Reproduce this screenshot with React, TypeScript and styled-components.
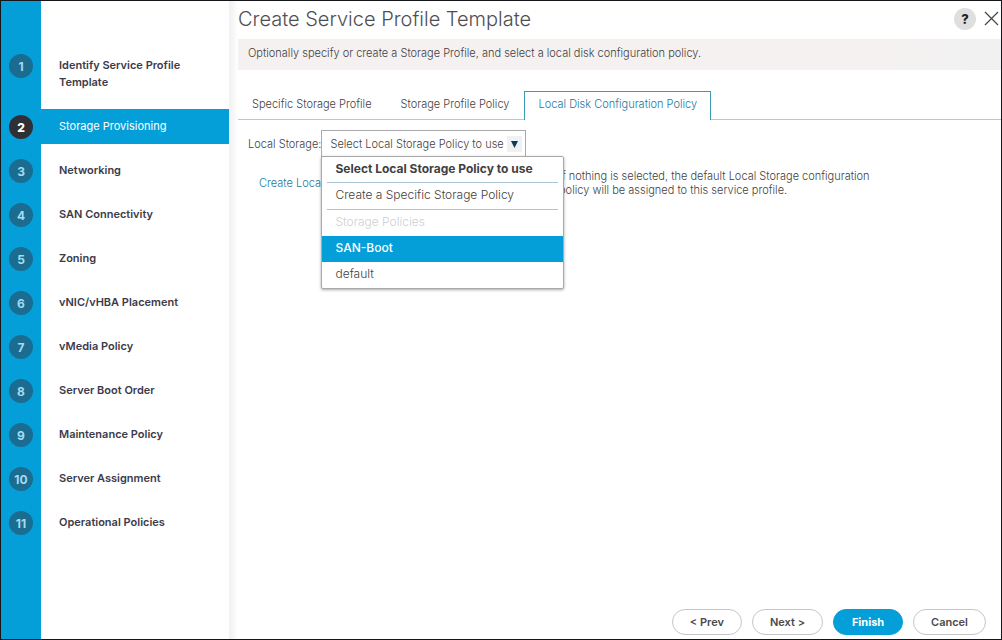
import React, { useState } from "react";
import styled, { createGlobalStyle, css } from "styled-components";

const BLUE = "#049fd9";

const GlobalStyle = createGlobalStyle`
  *, *::before, *::after { box-sizing: border-box; }
  body {
    margin: 0;
    background: #fff;
    color: #3f3f42;
    font-family: Inter, "Liberation Sans", sans-serif;
    font-size: 11px;
    font-weight: 300;
    line-height: 14px;
  }
  button, select { font: inherit; color: inherit; }
`;

const Wizard = styled.div`
  display: flex;
  min-height: 100vh;
  border: 1px solid #15151c;
`;

const Sidebar = styled.nav`
  flex: 0 0 228px;
  padding-top: 43px;
  background: linear-gradient(to right, ${BLUE} 40px, #fff 40px);
`;

const StepList = styled.ol`
  list-style: none;
  margin: 0;
  padding: 0;
`;

const StepRow = styled.li`
  display: flex;
  align-items: flex-start;
`;

const StepNumber = styled.span<{ $active: boolean }>`
  flex: 0 0 24px;
  height: 24px;
  margin: 10px 8px;
  border-radius: 50%;
  background: ${(p) => (p.$active ? "#2f2f36" : "#1a6d90")};
  color: ${(p) => (p.$active ? "#fff" : "#a4dcf2")};
  font-size: 12px;
  font-weight: ${(p) => (p.$active ? 800 : 700)};
  line-height: 25px;
  text-align: center;
`;

const StepLink = styled.a<{ $active: boolean }>`
  flex: 1;
  margin: 4px 0 5px;
  padding: 9px 40px 9px 18px;
  color: #3c3b4a;
  font-weight: 600;
  line-height: 17px;
  text-decoration: none;
  ${(p) =>
    p.$active &&
    css`
      background: ${BLUE};
      color: #fff;
      font-weight: 400;
    `}
`;

const Main = styled.main`
  flex: 1;
  min-width: 0;
  display: flex;
  flex-direction: column;
  padding-left: 9px;
  background: linear-gradient(to right, #f1efef, #fff 9px);
`;

const Header = styled.header`
  display: flex;
  align-items: center;
  height: 38px;
  padding: 0 2px 3px 0;
`;

const Title = styled.h1`
  flex: 1;
  margin: 0;
  font-size: 20px;
  font-weight: 300;
  line-height: 24px;
  color: #4f4f52;
`;

const HelpButton = styled.button`
  width: 22px;
  height: 22px;
  padding: 0;
  margin-right: 8px;
  border: 0;
  border-radius: 50%;
  background: #dfdfdf;
  color: #222;
  font-size: 13px;
  font-weight: 800;
  line-height: 22px;
`;

const CloseButton = styled.button`
  display: flex;
  padding: 0;
  border: 0;
  background: none;
`;

const Description = styled.p`
  margin: 0;
  padding: 7px 10px 10px;
  background: linear-gradient(to right, #f5f1f1 85%, #f1f1f1);
`;

const TabBar = styled.div`
  display: flex;
  gap: 1px;
  margin-top: 21px;
  border-bottom: 1px solid #c4c4c8;
`;

const Tab = styled.button<{ $active: boolean }>`
  margin-bottom: -1px;
  padding: 5px 13px 9px;
  border: 1px solid transparent;
  border-bottom: 0;
  background: none;
  ${(p) =>
    p.$active &&
    css`
      border-color: #3d9bb8;
      background: #fff;
      color: #1b7aa1;
    `}
`;

const Panel = styled.section`
  flex: 1;
  padding: 10px;
`;

const Field = styled.div`
  display: flex;
  align-items: center;
`;

const FieldLabel = styled.label`
  flex: 0 0 73px;
  white-space: nowrap;
`;

const SelectWrap = styled.div`
  position: relative;
  width: 205px;
`;

const PolicySelect = styled.select`
  display: block;
  width: 100%;
  height: 27px;
  padding: 0 20px 0 8px;
  border: 1px solid #aaa;
  border-radius: 0;
  background: #fff;
  appearance: none;
`;

const Arrow = styled.span`
  position: absolute;
  top: 6px;
  right: 4px;
  display: flex;
  align-items: center;
  justify-content: center;
  width: 15px;
  height: 16px;
  background: #f0f1f3;
  pointer-events: none;
`;

const Menu = styled.ul`
  position: absolute;
  z-index: 1;
  top: 26px;
  left: 0;
  width: 243px;
  margin: 0;
  padding: 0;
  list-style: none;
  border: 1px solid #aaa;
  border-radius: 2px;
  background: #fff;
  font-size: 12px;
  box-shadow: 0 1px 3px rgba(0, 0, 0, 0.35);
`;

const MenuItem = styled.li<{ $kind?: "title" | "muted" | "selected" }>`
  padding: 5px 13px 7px;
  ${(p) => p.$kind === "title" && css`padding-bottom: 6px; font-weight: 700;`}
  ${(p) => p.$kind === "muted" && css`color: #cfcfd2;`}
  ${(p) => p.$kind === "selected" && css`background: ${BLUE}; color: #fff; font-weight: 500;`}
`;

const Divider = styled.li`
  height: 1px;
  margin: 0 5px;
  background: #a9c4d6;
`;

const HintRow = styled.div`
  display: flex;
  align-items: center;
  margin-top: 12px;
  padding-left: 11px;
`;

const CreateLink = styled.a`
  flex: 0 0 300px;
  color: #1b7aa1;
  text-decoration: none;
`;

const Hint = styled.p`
  max-width: 320px;
  margin: 0;
`;

const Footer = styled.footer`
  display: flex;
  justify-content: flex-end;
  gap: 10px;
  padding: 0 15px 4px 0;
`;

const ActionButton = styled.button<{ $primary?: boolean }>`
  min-width: 70px;
  height: 26px;
  padding: 0 17px;
  border: 1px solid ${(p) => (p.$primary ? BLUE : "#c6c6c9")};
  border-radius: 13px;
  background: ${(p) => (p.$primary ? BLUE : "#fff")};
  color: ${(p) => (p.$primary ? "#fff" : "#4a4a4d")};
  font-weight: ${(p) => (p.$primary ? 700 : 600)};
`;

const steps = [
  "Identify Service Profile Template",
  "Storage Provisioning",
  "Networking",
  "SAN Connectivity",
  "Zoning",
  "vNIC/vHBA Placement",
  "vMedia Policy",
  "Server Boot Order",
  "Maintenance Policy",
  "Server Assignment",
  "Operational Policies",
];

const tabs = ["Specific Storage Profile", "Storage Profile Policy", "Local Disk Configuration Policy"];

export default function App() {
  const [step, setStep] = useState(1);
  const [tab, setTab] = useState(2);

  return (
    <>
      <GlobalStyle />
      <Wizard>
        <Sidebar aria-label="Wizard steps">
          <StepList>
            {steps.map((name, i) => (
              <StepRow key={name}>
                <StepNumber $active={i === step}>{i + 1}</StepNumber>
                <StepLink href="#" $active={i === step} onClick={() => setStep(i)}>
                  {name}
                </StepLink>
              </StepRow>
            ))}
          </StepList>
        </Sidebar>
        <Main>
          <Header>
            <Title>Create Service Profile Template</Title>
            <HelpButton aria-label="Help">?</HelpButton>
            <CloseButton aria-label="Close">
              <svg width="15" height="15" viewBox="0 0 15 15" stroke="#444" strokeWidth="1.2">
                <path d="M1 1L14 14M14 1L1 14" />
              </svg>
            </CloseButton>
          </Header>
          <Description>
            Optionally specify or create a Storage Profile, and select a local disk configuration policy.
          </Description>
          <TabBar role="tablist">
            {tabs.map((name, i) => (
              <Tab key={name} role="tab" aria-selected={i === tab} $active={i === tab} onClick={() => setTab(i)}>
                {name}
              </Tab>
            ))}
          </TabBar>
          <Panel>
            <Field>
              <FieldLabel htmlFor="local-storage">Local Storage:</FieldLabel>
              <SelectWrap>
                <PolicySelect id="local-storage">
                  <option>Select Local Storage Policy to use</option>
                  <option>Create a Specific Storage Policy</option>
                  <option>SAN-Boot</option>
                  <option>default</option>
                </PolicySelect>
                <Arrow>
                  <svg width="7" height="7" viewBox="0 0 7 7" fill="#0b3a5c">
                    <path d="M0 0H7L3.5 7Z" />
                  </svg>
                </Arrow>
                <Menu role="listbox" aria-label="Local Storage">
                  <MenuItem role="option" $kind="title">Select Local Storage Policy to use</MenuItem>
                  <Divider role="separator" />
                  <MenuItem role="option">Create a Specific Storage Policy</MenuItem>
                  <Divider role="separator" />
                  <MenuItem $kind="muted">Storage Policies</MenuItem>
                  <MenuItem role="option" aria-selected $kind="selected">SAN-Boot</MenuItem>
                  <MenuItem role="option">default</MenuItem>
                </Menu>
              </SelectWrap>
            </Field>
            <HintRow>
              <CreateLink href="#">Create Local</CreateLink>
              <Hint>
                If nothing is selected, the default Local Storage configuration policy will be assigned to this
                service profile.
              </Hint>
            </HintRow>
          </Panel>
          <Footer>
            <ActionButton>&lt; Prev</ActionButton>
            <ActionButton>Next &gt;</ActionButton>
            <ActionButton $primary>Finish</ActionButton>
            <ActionButton>Cancel</ActionButton>
          </Footer>
        </Main>
      </Wizard>
    </>
  );
}
